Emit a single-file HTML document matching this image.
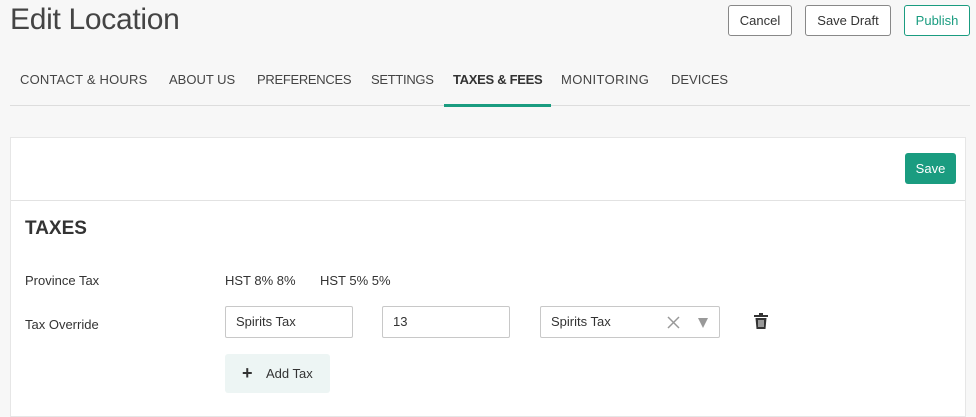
<!DOCTYPE html>
<html><head><style>
*{box-sizing:border-box;margin:0;padding:0}
body{width:976px;height:401px;overflow:hidden;background:#f7f7f7;font-family:"Liberation Sans",sans-serif;color:#333;position:relative}
.a{position:absolute}
h1{position:absolute;left:10px;top:3px;font-size:30px;font-weight:300;color:#444;letter-spacing:-0.3px}
.btn{position:absolute;top:5px;height:31px;border:1px solid #888;border-radius:3px;background:#fff;font-size:13px;line-height:29px;text-align:center;color:#333}
.tab{position:absolute;top:72px;font-size:13px;color:#444}
.card{position:absolute;left:10px;top:137px;width:956px;height:280px;background:#fff;border:1px solid #e6e6e6}
.inp{position:absolute;top:306px;height:32px;border:1px solid #c8c8c8;border-radius:2px;background:#fff;font-size:13px;line-height:30px;padding-left:10px;color:#333}
</style></head><body>
<h1>Edit Location</h1>
<div class="btn" style="left:728px;width:64px">Cancel</div>
<div class="btn" style="left:805px;width:86px">Save Draft</div>
<div class="btn" style="left:904px;width:66px;border-color:#1a9c80;color:#1a9c80">Publish</div>
<div class="tab" style="left:20px;letter-spacing:0.2px">CONTACT &amp; HOURS</div>
<div class="tab" style="left:169px">ABOUT US</div>
<div class="tab" style="left:257px;letter-spacing:-0.3px">PREFERENCES</div>
<div class="tab" style="left:371px;letter-spacing:-0.3px">SETTINGS</div>
<div class="tab" style="left:453px;font-weight:bold;color:#333;letter-spacing:-0.3px">TAXES &amp; FEES</div>
<div class="tab" style="left:561px;letter-spacing:0.4px">MONITORING</div>
<div class="tab" style="left:671px">DEVICES</div>
<div class="a" style="left:10px;top:105px;width:960px;height:1px;background:#ddd"></div>
<div class="a" style="left:444px;top:104px;width:107px;height:3px;background:#1a9c80"></div>
<div class="card">
 <div class="a" style="left:894px;top:15px;width:51px;height:31px;background:#1a9c80;border-radius:3px;color:#fff;font-size:13px;line-height:31px;text-align:center">Save</div>
 <div class="a" style="left:0;top:62px;width:954px;height:1px;background:#e2e2e2"></div>
 <div class="a" style="left:14px;top:80px;font-size:19px;font-weight:bold;color:#333">TAXES</div>
 <div class="a" style="left:14px;top:135px;font-size:13px">Province Tax</div>
 <div class="a" style="left:214px;top:135px;font-size:13px">HST 8% 8%</div>
 <div class="a" style="left:309px;top:135px;font-size:13px">HST 5% 5%</div>
 <div class="a" style="left:14px;top:179px;font-size:13px">Tax Override</div>
</div>
<div class="inp" style="left:225px;width:128px">Spirits Tax</div>
<div class="inp" style="left:382px;width:128px">13</div>
<div class="inp" style="left:540px;width:180px">Spirits Tax
 <svg class="a" style="left:126px;top:9px" width="13" height="13" viewBox="0 0 13 13"><path d="M1 1L12 12M12 1L1 12" stroke="#999" stroke-width="1.5"/></svg>
 <svg class="a" style="left:157px;top:11px" width="10" height="10" viewBox="0 0 10 10"><path d="M0 0H10L5 10z" fill="#999"/></svg></div>
<svg class="a" style="left:754px;top:313px" width="14" height="16" viewBox="0 0 14 16"><rect x="0" y="2" width="14" height="2" fill="#333"/><rect x="5" y="0" width="4" height="2" fill="#333"/><path d="M1.5 5h11l-1 11h-9z" fill="#333"/><rect x="4.5" y="7" width="1" height="7" fill="#fff"/><rect x="6.5" y="7" width="1" height="7" fill="#fff"/><rect x="8.5" y="7" width="1" height="7" fill="#fff"/></svg>
<div class="a" style="left:225px;top:354px;width:105px;height:39px;background:#edf5f4;border-radius:3px;font-size:13px;line-height:39px;color:#333"><b style="position:absolute;left:17px;font-size:18px">+</b><span style="position:absolute;left:41px">Add Tax</span></div>
</body></html>
